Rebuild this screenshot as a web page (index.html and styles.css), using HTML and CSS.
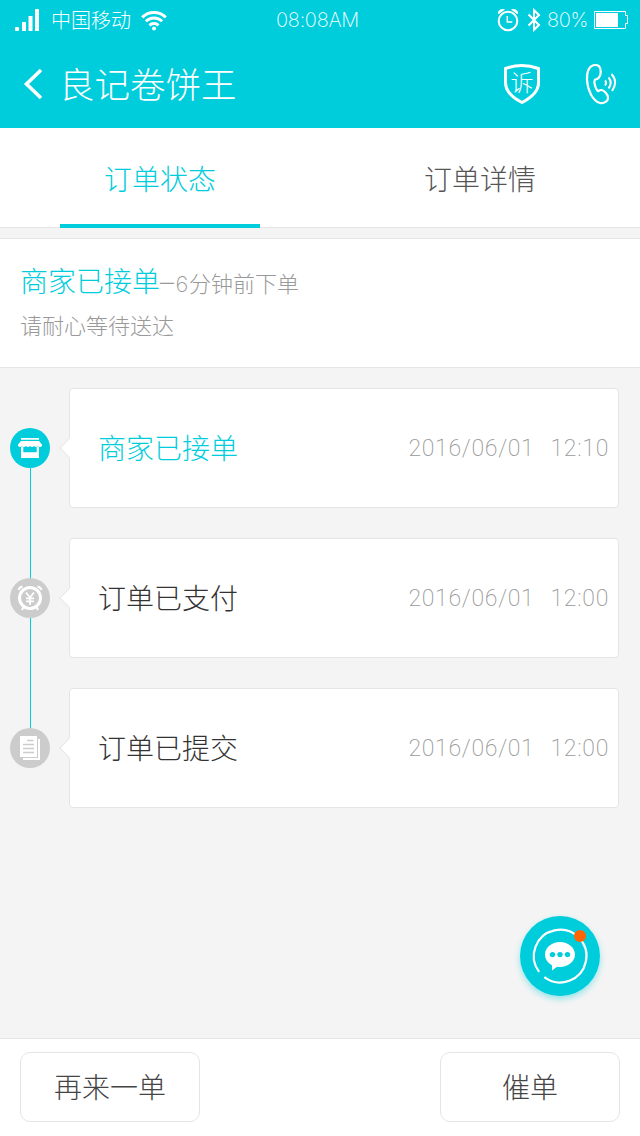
FILE: index.html
```html
<!DOCTYPE html>
<html lang="zh-CN">
<head>
    <meta charset="UTF-8">
    <meta name="viewport" content="width=640">
    <title>订单状态</title>
    <link rel="stylesheet" href="styles.css">
</head>
<body>
    <header class="header">
        <div class="status-bar">
            <div class="status-left">
                <svg class="signal" width="25" height="22" viewBox="0 0 25 22" fill="#fff">
                    <rect x="0" y="18" width="4" height="4" rx="1"/>
                    <rect x="7" y="13" width="4" height="9" rx="0.5"/>
                    <rect x="13.500" y="7" width="4" height="15" rx="0.5"/>
                    <rect x="20" y="0" width="4" height="22" rx="0.5"/>
                </svg>
                <span class="carrier">中国移动</span>
                <svg class="wifi" width="26" height="21" viewBox="0 0 26 21" fill="none" stroke="#fff" stroke-width="3">
                    <path d="M1.200 7.400a16.800 16.800 0 0 1 23.600 0"/>
                    <path d="M4.800 11.300a11.700 11.700 0 0 1 16.400 0"/>
                    <path d="M8.500 15.300a6.500 6.500 0 0 1 9 0"/>
                    <circle cx="13" cy="18.400" r="2" fill="#fff" stroke="none"/>
                </svg>
            </div>
            <span class="clock">08:08AM</span>
            <div class="status-right">
                <svg width="22" height="24" viewBox="0 0 22 24" fill="none" stroke="#fff" stroke-width="2">
                    <circle cx="11" cy="13" r="9.300"/>
                    <path d="M10.300 8v6h5" stroke-width="1.500"/>
                    <path d="M.8 5.500C1 2 4.500.2 8 1.500L2 6zM21.200 5.500C21 2 17.500.2 14 1.500L20 6z" fill="#fff" stroke="none"/>
                </svg>
                <svg class="bluetooth" width="14" height="26" viewBox="0 0 14 26" fill="none" stroke="#fff" stroke-width="2">
                    <path d="M1.500 7.500l10.500 10.500-5 4.800v-19.600l5 4.800L1.500 18.500"/>
                </svg>
                <span class="percent">80%</span>
                <svg class="battery" width="35" height="18" viewBox="0 0 35 18" fill="none" stroke="#fff">
                    <path d="M.5.500h31v4h2v8h-2v5H.5z"/>
                    <rect x="2" y="2" width="22" height="14" fill="#fff" stroke="none"/>
                </svg>
            </div>
        </div>
        <div class="title-bar">
            <svg class="back" width="20" height="32" viewBox="0 0 20 32" fill="none" stroke="#fff" stroke-width="3.600">
                <path d="M18 2L3.500 16 18 30"/>
            </svg>
            <h1 class="shop-name">良记卷饼王</h1>
            <span class="complain">
                <svg width="36" height="40" viewBox="0 0 36 40" fill="none" stroke="#fff" stroke-width="3" stroke-linejoin="round">
                    <path d="M18 1.500C13 1.500 7 2.500 1.500 4.500V19c0 8.500 6 14 16.500 19.500C28.500 33 34.500 27.500 34.500 19V4.500C29 2.500 23 1.500 18 1.500z"/>
                </svg>
                <span class="complain-text">诉</span>
            </span>
            <svg class="phone" width="32" height="42" viewBox="0 0 32 42" fill="none" stroke="#fff" stroke-width="2.200" stroke-linejoin="round">
                <path d="M10.500 2C4 2 1.500 9 2 17c.6 10 5.500 21 13 23 4 1 8.500-2 8-5.500-.4-3-3.500-7-6.500-7.500-2.500-.3-3 2-4 .8C10.500 25.500 9 20 9.500 17.500c.3-1.700 2.500-.8 4-2.500 1.800-2 2.500-5.500 2-8.500C15 3.500 13 2 10.500 2z"/>
                <path d="M20 17.500q2.200 2.200 0 5M23.500 14.500q4.500 5 0 11M26.500 11q7 8 .5 17" stroke-width="2"/>
            </svg>
        </div>
    </header>

    <nav class="tabs">
        <a class="tab active">订单状态</a>
        <a class="tab">订单详情</a>
    </nav>

    <section class="summary">
        <p class="summary-state"><span class="state-name">商家已接单</span><span class="minutes"><span class="dash">–</span>6</span>分钟前下单</p>
        <p class="summary-tip">请耐心等待送达</p>
    </section>

    <main class="timeline">
        <div class="step current">
            <div class="step-icon">
                <svg width="24" height="24" viewBox="0 0 24 24" fill="#fff">
                    <path d="M3 2h18v1.800H3zM3 5h18l3 3.500v1.500q-2 2-4 0-2 2-4 0-2 2-4 0-2 2-4 0-2 2-4 0-2 2-4 0V8.500z"/>
                    <path d="M3 10.500h2.300v5.800h13.400v-5.800H21V22H3z"/>
                </svg>
            </div>
            <div class="step-card">
                <span class="step-name">商家已接单</span>
                <time class="step-time"><span>2016/06/01</span><span>12:10</span></time>
            </div>
        </div>
        <div class="step">
            <div class="step-icon">
                <svg width="26" height="26" viewBox="0 0 26 26" fill="none" stroke="#fff">
                    <circle cx="13" cy="13" r="10.500" stroke-width="3"/>
                    <path d="M1.500 5q1-3 4-3.500M24.500 5q-1-3-4-3.500" stroke-width="2"/>
                    <path d="M6.500 22l-1.500 3M19.500 22l1.500 3" stroke-width="2"/>
                    <path d="M9 7.500l4 5 4-5M13 12.500v7.500M9 13.300h8M9 16.300h8" stroke-width="1.700"/>
                </svg>
            </div>
            <div class="step-card">
                <span class="step-name">订单已支付</span>
                <time class="step-time"><span>2016/06/01</span><span>12:00</span></time>
            </div>
        </div>
        <div class="step">
            <div class="step-icon">
                <svg width="20" height="24" viewBox="0 0 20 24" fill="#fff">
                    <path d="M18 3h2v21H3v-2h15z"/>
                    <path d="M0 0h17v21H0z"/>
                    <path d="M7 4.500h6.500M3 8.500h11M3 12.500h11M3 16.500h11" stroke="#ccc" stroke-width="1.400"/>
                </svg>
            </div>
            <div class="step-card">
                <span class="step-name">订单已提交</span>
                <time class="step-time"><span>2016/06/01</span><span>12:00</span></time>
            </div>
        </div>
    </main>

    <div class="chat">
        <svg width="80" height="80" viewBox="0 0 80 80">
            <path d="M19.100 55.900A26.300 26.300 0 1 1 24.300 61.100" fill="none" stroke="#fff" stroke-width="2.200"/>
            <path d="M40 26c8.300 0 15 5.600 15 12.500S48.300 51 40 51q-1.500 0-3-.3L32 54.500v-5.300C27.800 47 25 43 25 38.500 25 31.600 31.700 26 40 26z" fill="#fff"/>
            <g fill="#00cddc">
                <circle cx="32.500" cy="38.600" r="2.700"/>
                <circle cx="40" cy="38.600" r="2.700"/>
                <circle cx="47.500" cy="38.600" r="2.700"/>
            </g>
            <circle cx="60" cy="20" r="6" fill="#ff6400"/>
        </svg>
    </div>

    <footer class="footer">
        <button class="btn">再来一单</button>
        <button class="btn">催单</button>
    </footer>
</body>
</html>
```
FILE: styles.css
```css
* {
    box-sizing: border-box;
}
body {
    width: 640px;
    height: 1136px;
    margin: 0;
    display: flex;
    flex-direction: column;
    position: relative;
    overflow: hidden;
    background-color: #f4f4f4;
    font-family: 'Noto Sans CJK SC', sans-serif;
    font-weight: 200;
    color: #333;
}
svg {
    display: block;
    flex: none;
}
h1, p {
    margin: 0;
    font-weight: inherit;
}

.header {
    height: 128px;
    background-color: #00cddc;
    color: #fff;
}
.status-bar {
    height: 40px;
    padding: 0 11px 0 15px;
    display: grid;
    grid-template-columns: 1fr auto 1fr;
    align-items: center;
}
.status-left, .status-right {
    display: flex;
    align-items: center;
}
.status-right {
    justify-content: flex-end;
}
.carrier {
    margin: 0 10px 0 11px;
    font-size: 20px;
    line-height: 40px;
}
.clock, .percent {
    font-family: Inter, sans-serif;
    font-size: 20px;
    font-weight: 200;
    letter-spacing: -0.3px;
}
.clock {
    margin-right: 9px;
}
.bluetooth {
    margin: 0 6px 0 8px;
}
.battery {
    margin-left: 6px;
}
.title-bar {
    height: 88px;
    padding: 0 23px;
    display: flex;
    align-items: center;
}
.shop-name {
    margin-left: 16px;
    flex: 1;
    font-size: 35.5px;
    line-height: 86px;
    height: 88px;
}
.complain {
    position: relative;
    margin-right: 45px;
}
.complain-text {
    position: absolute;
    left: 0;
    top: 0;
    width: 36px;
    font-size: 23px;
    line-height: 35px;
    text-align: center;
}

.tabs {
    height: 100px;
    display: flex;
    justify-content: space-around;
    background-color: #fff;
    border-bottom: 1px solid #e5e5e5;
}
.tab {
    width: 200px;
    height: 100px;
    font-size: 28px;
    line-height: 100px;
    text-align: center;
    color: #555;
}
.tab.active {
    color: #00cddc;
    border-bottom: 4px solid #00cddc;
}

.summary {
    height: 130px;
    margin-top: 10px;
    padding: 19px 20px;
    background-color: #fff;
    border-top: 1px solid #e5e5e5;
    border-bottom: 1px solid #e5e5e5;
    font-size: 22px;
    color: #999;
}
.summary-state {
    line-height: 44px;
}
.state-name {
    font-size: 28px;
    color: #00cddc;
}
.minutes {
    font-family: Inter, sans-serif;
    letter-spacing: 0.6px;
}
.dash {
    font-size: 28px;
    letter-spacing: 1.5px;
}
.summary-tip {
    line-height: 36px;
}

.timeline {
    flex: 1;
    padding: 20px 21px 0 10px;
}
.step {
    display: flex;
    align-items: center;
    height: 120px;
    margin-bottom: 30px;
    position: relative;
}
/* line down to the next step */
.step:not(:last-child)::after {
    content: '';
    position: absolute;
    left: 20px;
    top: 80px;
    width: 1px;
    height: 110px;
    background-color: #00cddc;
}
.step-icon {
    width: 40px;
    height: 40px;
    margin-right: 19px;
    flex: none;
    display: flex;
    align-items: center;
    justify-content: center;
    border-radius: 50%;
    background-color: #ccc;
}
.step-card {
    position: relative;
    flex: 1;
    height: 120px;
    padding: 0 9px 0 28px;
    display: flex;
    align-items: center;
    justify-content: space-between;
    background-color: #fff;
    border: 1px solid #e5e5e5;
    border-radius: 4px;
}
.step-card::before {
    content: '';
    position: absolute;
    left: -8px;
    top: 52px;
    width: 13px;
    height: 13px;
    background-color: #fff;
    border-left: 1px solid #e5e5e5;
    border-bottom: 1px solid #e5e5e5;
    transform: rotate(45deg);
}
.step-name {
    padding-bottom: 2px;
    font-size: 28px;
}
.step-time {
    display: flex;
    gap: 16px;
    padding-top: 1px;
    font-family: Roboto, sans-serif;
    font-size: 23px;
    letter-spacing: 0.7px;
    color: #999;
}
.current .step-icon {
    background-color: #00cddc;
}
.current .step-name {
    color: #00cddc;
}

.chat {
    position: absolute;
    left: 520px;
    top: 916px;
    width: 80px;
    height: 80px;
    border-radius: 50%;
    background-color: #00cddc;
    box-shadow: 0 3px 6px rgba(0, 205, 220, 0.4);
}

.footer {
    height: 98px;
    padding: 13px 20px;
    display: flex;
    justify-content: space-between;
    background-color: #fff;
    border-top: 1px solid #e5e5e5;
}
.btn {
    width: 180px;
    height: 70px;
    padding: 0 0 2px;
    background-color: #fff;
    border: 1px solid #e5e5e5;
    border-radius: 10px;
    font: inherit;
    font-size: 28px;
    color: #444;
}
```
